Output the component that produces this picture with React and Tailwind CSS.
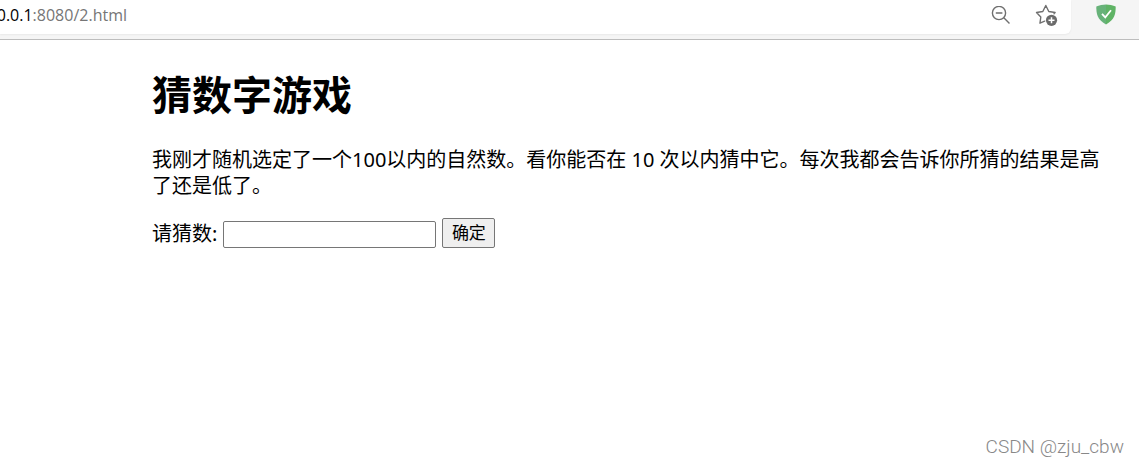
function ZoomOutIcon() {
  return (
    <svg viewBox="0 0 20 20" className="size-5" fill="none" stroke="#6f6f6f" strokeWidth="1.4" aria-hidden="true">
      <circle cx="8" cy="7" r="6.6" />
      <path d="M12.800 11.800 18.500 17.500M4.800 7h6.600" />
    </svg>
  );
}

function FavoriteIcon() {
  return (
    <svg viewBox="0 0 24 24" className="size-6" aria-hidden="true">
      <path
        d="M9.600 17.200 5 19.200 5.800 13 1.500 8.500 7.800 7.500 10.800 1.500 13.800 7.500 20.100 8.500 19 9.700"
        fill="none"
        stroke="#6f6f6f"
        strokeWidth="1.4"
        strokeLinejoin="round"
        strokeLinecap="round"
      />
      <circle cx="16.500" cy="16.300" r="5.600" fill="#6b6b6b" />
      <path d="M16.500 13.300v6M13.500 16.300h6" stroke="#fff" strokeWidth="1.5" />
    </svg>
  );
}

function ShieldIcon() {
  return (
    <svg viewBox="0 0 20 21" className="h-[21px] w-5" aria-hidden="true">
      <path d="M10 .5C7 .5 3 1.200.3 2.600c0 7 .7 13 9.700 17.800V.5Z" fill="#67b279" />
      <path d="M10 .5c3 0 7 .7 9.700 2.100 0 7-.7 13-9.700 17.800V.5Z" fill="#5fb365" />
      <path d="m6 9.800 3.300 3.500L15 6.300" fill="none" stroke="#fff" strokeWidth="1.800" />
    </svg>
  );
}

export default function App() {
  return (
    <div className="flex min-h-screen flex-col bg-white font-['Noto_Sans','Noto_Sans_CJK_SC',sans-serif] text-xl/[26px] text-black">
      <header className="flex h-10 items-start border-b border-[#bdbdbd] bg-[#f5f5f5]">
        <div className="flex h-[34px] grow items-start justify-between rounded-br-md bg-white pr-3 shadow-xs">
          <div className="flex h-[30px] w-[127px] items-center justify-end overflow-hidden font-['Open_Sans',sans-serif] text-base/6 whitespace-nowrap">
            <span>127.0.0.1</span>
            <span className="text-[#767676]">:8080/2.html</span>
          </div>
          <div className="flex gap-6 pt-1">
            <button type="button" aria-label="缩小" className="flex h-6 items-center">
              <ZoomOutIcon />
            </button>
            <button type="button" aria-label="收藏" className="flex h-6 items-center">
              <FavoriteIcon />
            </button>
          </div>
        </div>
        <button type="button" aria-label="安全" className="mr-[23px] ml-[25px] pt-1">
          <ShieldIcon />
        </button>
      </header>
      <main className="grow pt-7 pr-[30px] pl-[152px]">
        <h1 className="text-[40px]/[54px] font-bold">猜数字游戏</h1>
        <p className="mt-[25px]">
          我刚才随机选定了一个100以内的自然数。看你能否在 10 次以内猜中它。每次我都会告诉你所猜的结果是高了还是低了。
        </p>
        <form className="mt-[19px] flex items-end" onSubmit={(e) => e.preventDefault()}>
          <label htmlFor="guess" className="mr-1.5 leading-7">
            请猜数:
          </label>
          <input
            id="guess"
            type="text"
            className="mr-1.5 h-[27px] w-[213px] rounded-xs border border-[#767676] bg-white px-1 text-base"
          />
          <button
            type="submit"
            className="h-[30px] min-w-[53px] rounded-xs border border-[#767676] bg-[#efefef] px-2 text-[17px]/6"
          >
            确定
          </button>
        </form>
      </main>
      <footer className="flex justify-end pr-[15px] pb-2 font-['Roboto',sans-serif] text-[19px]/6 font-light text-[#888888]">
        CSDN @zju_cbw
      </footer>
    </div>
  );
}
